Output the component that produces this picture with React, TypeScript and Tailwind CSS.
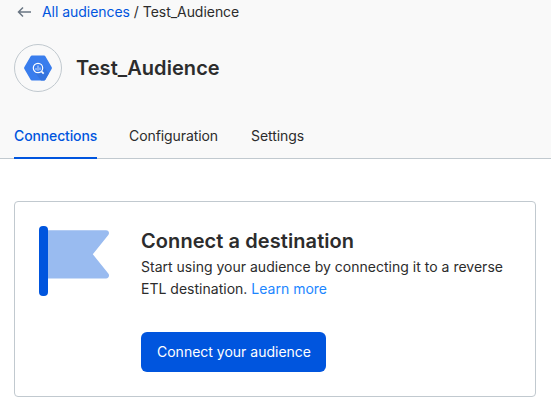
function BackArrow() {
  return (
    <svg className="block h-3 w-[14px]" viewBox="0 0 14 12" fill="none" stroke="#6a7683" strokeWidth="1.5">
      <path d="M14 6H2M6 1.500 1.500 6 6 10.500" />
    </svg>
  );
}

function WarehouseLogo() {
  return (
    <svg className="block h-[26px] w-[28px]" viewBox="0 0 28 26">
      <path d="M8 .5h12q1 0 1.5.9l6.1 10.5q.6 1.1 0 2.2l-6.100 10.500q-.5.9-1.500.9H8q-1 0-1.500-.9L.4 14.100q-.6-1.100 0-2.200L6.500 1.400Q7 .5 8 .5Z" fill="#397ded" />
      <path d="M18.500 10l6.300 8.500-3.300 6.100q-.5.9-1.500.9h-3L11 17.500Z" fill="#3474df" />
      <circle cx="14" cy="13" r="4.700" fill="#397ded" stroke="#fff" strokeWidth="1.200" />
      <path d="M17.500 16.500l2.200 2.200" stroke="#fff" strokeWidth="1.700" />
      <path d="M12 13v2.200M14 10.500v5.300M16 12.500v2.500" stroke="#b9d2fb" strokeWidth="1.100" />
    </svg>
  );
}

function Flag() {
  return (
    <svg className="block h-[70px] w-[71px]" viewBox="0 0 71 70">
      <path d="M7 4.300h60c2.600 0 3.900 2.700 2.300 4.700L53.800 28.300l15.500 19.200c1.700 2.100.4 4.900-2.300 4.900H7Z" fill="#99bbf0" />
      <rect width="9" height="70" rx="4" fill="#0055de" />
    </svg>
  );
}

export default function App() {
  return (
    <div className="h-[411px] w-[551px] overflow-hidden bg-white font-['Inter',sans-serif] text-sm text-[#2c2c2c]">
      <header className="h-[159px] border-b border-[#c1c9cf] bg-[#f9f9f9] px-[14px]">
        <div className="flex h-6 items-center pl-[3px]">
          <BackArrow />
          <div className="ml-[11px] whitespace-pre leading-6 tracking-[-0.04px]">
            <a className="text-[#0055de]">All audiences</a> / Test_Audience
          </div>
        </div>
        <div className="mt-5 flex items-center gap-[14px]">
          <div className="flex size-12 items-center justify-center rounded-full border border-[#c1c9cf]">
            <WarehouseLogo />
          </div>
          <h1 className="text-xl font-semibold leading-7 tracking-[0.06px]">Test_Audience</h1>
        </div>
        <nav className="mt-[22px] flex h-[45px] leading-[44px] tracking-[-0.08px]">
          <a className="mr-8 w-[83px] whitespace-nowrap border-b-2 border-[#0055de] font-medium tracking-[-0.13px] text-[#0055de]">Connections</a>
          <a className="mr-8 w-[90px]">Configuration</a>
          <a>Settings</a>
        </nav>
      </header>
      <main className="px-[14px] pt-[42px]">
        <section className="flex h-[196px] w-[522px] rounded-[4px] border border-[#c1c9cf] pl-6 pt-6">
          <Flag />
          <div className="ml-[31px]">
            <h2 className="text-xl font-semibold leading-[30px] tracking-[0.08px]">Connect a destination</h2>
            <p className="w-[370px] leading-[22px] tracking-[0.01px]">
              Start using your audience by connecting it to a reverse ETL destination. <a className="text-[#1c86ff]">Learn more</a>
            </p>
            <button className="mt-8 h-10 w-[185px] rounded-[6px] bg-[#0055de] pl-px text-white">Connect your audience</button>
          </div>
        </section>
      </main>
    </div>
  );
}
